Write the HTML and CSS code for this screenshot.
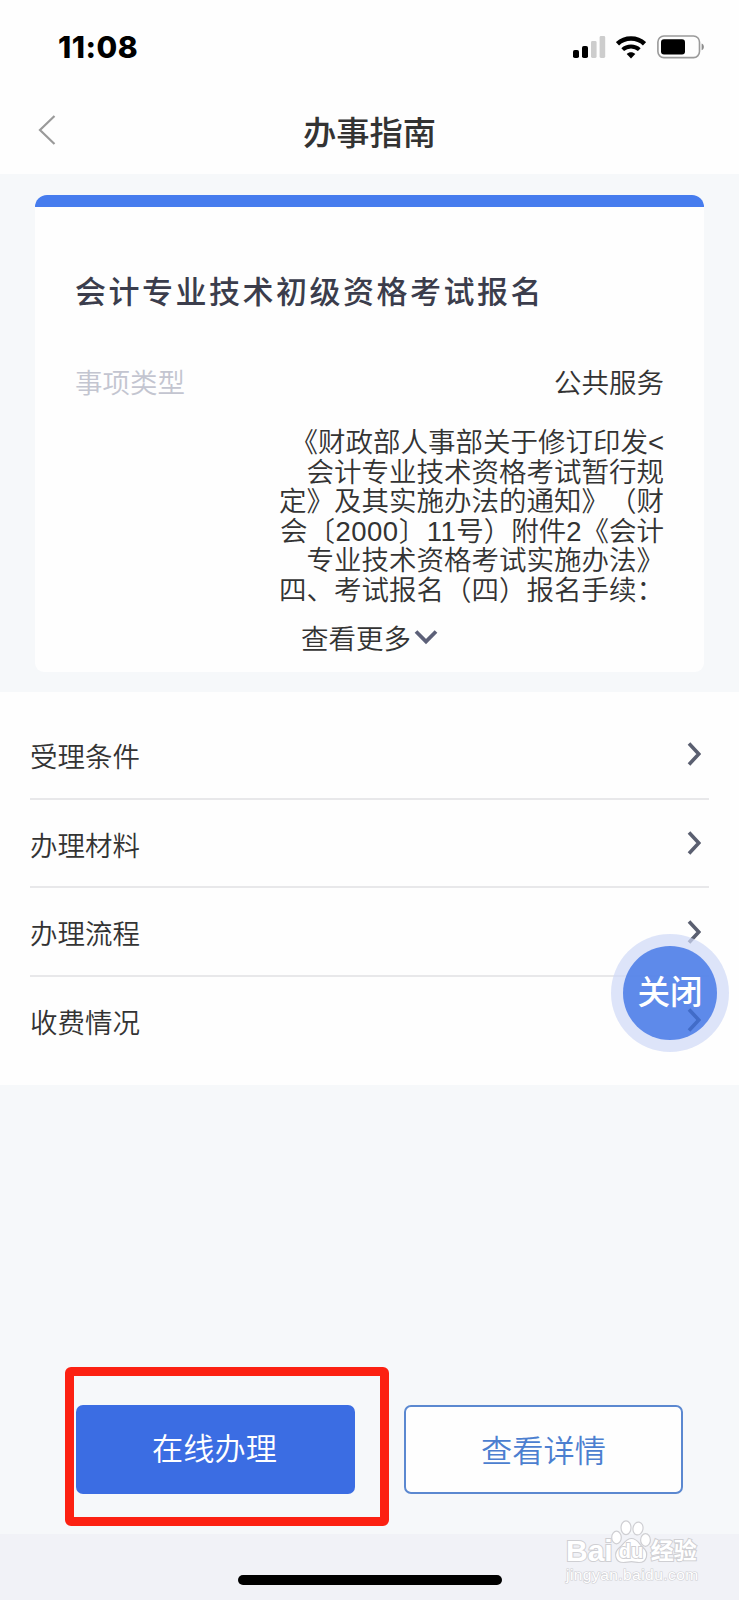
FILE: index.html
```html
<!DOCTYPE html>
<html lang="zh-CN">
<head>
<meta charset="utf-8">
<meta name="viewport" content="width=device-width">
<title>办事指南</title>
<link rel="stylesheet" href="styles.css">
</head>
<body>
<div class="app">
  <header class="top">
    <div class="status">
      <span class="time">11:08</span>
      <div class="status-icons">
        <svg class="signal" viewBox="0 0 33 22" width="33" height="22">
          <rect x="0" y="14" width="6" height="8" rx="1.8" fill="#000"/>
          <rect x="9" y="10" width="6" height="12" rx="1.8" fill="#000"/>
          <rect x="18" y="5" width="5.6" height="17" rx="1.4" fill="#cdcdcd"/>
          <rect x="26.6" y="0" width="5.6" height="22" rx="1.4" fill="#cdcdcd"/>
        </svg>
        <svg class="wifi" viewBox="0 0 30 23" width="30" height="23">
          <path d="M1.500 7.800C9 .8 21 .8 28.500 7.800" fill="none" stroke="#000" stroke-width="4.600"/>
          <path d="M6.700 13.600c4.600-4.300 12-4.300 16.600 0" fill="none" stroke="#000" stroke-width="4"/>
          <path d="M10.700 18.100c2.400-2.400 6.200-2.400 8.600 0L15 22.500z" fill="#000"/>
        </svg>
        <svg class="battery" viewBox="0 0 48 24" width="48" height="24">
          <rect x=".9" y="1" width="41.6" height="21.6" rx="6" fill="none" stroke="#9a9a9a" stroke-width="1.6"/>
          <rect x="4" y="4.2" width="24" height="15.2" rx="3" fill="#000"/>
          <path d="M44.600 8.400c3 1 3 5.800 0 6.800z" fill="#8c8c8c"/>
        </svg>
      </div>
    </div>
    <nav class="nav">
      <svg class="back" viewBox="0 0 18 32" width="18" height="32"><path d="M16.500 2 2 16l14.500 14" fill="none" stroke="#9a9a9a" stroke-width="2.200"/></svg>
      <h1 class="nav-title">办事指南</h1>
    </nav>
  </header>

  <section class="card">
    <h2 class="card-title">会计专业技术初级资格考试报名</h2>
    <div class="row">
      <span class="label">事项类型</span>
      <span>公共服务</span>
    </div>
    <p class="basis">《财政部人事部关于修订印发&lt;<br>会计专业技术资格考试暂行规<br>定》及其实施办法的通知》（财<br>会<span class="wide">〔2000〕11</span>号）附件2《会计<br>专业技术资格考试实施办法》<br>四、考试报名（四）报名手续：</p>
    <div class="more">
      <span>查看更多</span>
      <svg viewBox="0 0 24 16" width="24" height="16"><path d="M2 2.500 12 12.500 22 2.500" fill="none" stroke="#5c6078" stroke-width="3.800"/></svg>
    </div>
  </section>

  <section class="list">
    <div class="item"><span>受理条件</span><svg class="chev" viewBox="0 0 14 24" width="14" height="24"><path d="M2 1.500 11.800 12 2 22.500" fill="none" stroke="#5a5f70" stroke-width="3.600"/></svg></div>
    <div class="item"><span>办理材料</span><svg class="chev" viewBox="0 0 14 24" width="14" height="24"><path d="M2 1.500 11.800 12 2 22.500" fill="none" stroke="#5a5f70" stroke-width="3.600"/></svg></div>
    <div class="item"><span>办理流程</span><svg class="chev" viewBox="0 0 14 24" width="14" height="24"><path d="M2 1.500 11.800 12 2 22.500" fill="none" stroke="#5a5f70" stroke-width="3.600"/></svg></div>
    <div class="close"><span class="close-core">关闭</span></div>
    <div class="item last"><span>收费情况</span><svg class="chev" viewBox="0 0 14 24" width="14" height="24"><path d="M2 1.500 11.800 12 2 22.500" fill="none" stroke="#426cc8" stroke-width="3.600"/></svg></div>
  </section>

  <footer class="actions">
    <div class="btn primary"><span>在线办理</span><span class="mark"></span></div>
    <div class="btn outline"><span>查看详情</span></div>
  </footer>
  <div class="home"><span class="home-bar"></span></div>

  <div class="wm">
    <div class="wm-top">
      <span class="wm-bai">Bai</span>
      <span class="wm-paw">
        <svg viewBox="0 0 40 44" width="40" height="44" fill="#fff" stroke="#cfcfd3" stroke-width="1.200">
          <path d="M20.500 18.500c6 0 7.500 5.500 11.500 9 6.500 5.500 4 15-4 15-3 0-4.500-.8-7.500-.8s-5 .8-8 .8c-8.500 0-10.500-9.500-4-15 4.500-3.500 6-9 12-9z"/>
          <ellipse cx="5.500" cy="17.500" rx="4.800" ry="6.300"/>
          <ellipse cx="15" cy="7.800" rx="5" ry="6.900"/>
          <ellipse cx="27" cy="8.500" rx="5" ry="6.500" transform="rotate(10 27 8.500)"/>
          <ellipse cx="34.500" cy="20" rx="4.900" ry="6.300"/>
        </svg>
        <span class="wm-du">du</span>
      </span>
      <span class="wm-cn">经验</span>
    </div>
    <div class="wm-url">jingyan.baidu.com</div>
  </div>
</div>
</body>
</html>
```
FILE: styles.css
```css
* { box-sizing: border-box; }
body {
  margin: 0;
  background: #f6f8fa;
  color: #333;
  font-family: "Liberation Sans", "Noto Sans CJK SC", sans-serif;
  font-size: 27.5px;
  font-weight: 350;
  line-height: 30px;
  text-spacing-trim: space-all;
}
h1, h2, p { margin: 0; }
svg { display: block; flex: none; }
.app {
  position: relative;
  width: 739px;
  height: 1600px;
  display: flex;
  flex-direction: column;
  overflow: hidden;
  white-space: nowrap;
}

.top { height: 174px; background: #fefefe; }
.status {
  height: 94px;
  padding: 0 34px 0 58px;
  display: flex;
  align-items: center;
  justify-content: space-between;
}
.time {
  font: 800 30px/30px Inter, sans-serif;
  letter-spacing: .5px;
  color: #000;
}
.status-icons { display: flex; align-items: center; }
.wifi { margin-left: 10px; }
.battery { margin-left: 11px; }
.nav {
  height: 76px;
  padding: 0 38px;
  display: grid;
  grid-template-columns: 18px 1fr 18px;
  align-items: center;
}
.back { margin-top: -4px; }
.nav-title {
  padding-top: 3px;
  text-align: center;
  font-size: 33.3px;
  line-height: 40px;
  font-weight: 500;
  color: #333;
}

.card {
  height: 477px;
  margin: 21px 35px 20px;
  padding: 66px 40px 0;
  border-top: 12px solid #467cee;
  border-radius: 12px 12px 9px 9px;
  background: #fefefe;
}
.card-title {
  font-size: 31px;
  line-height: 40px;
  letter-spacing: 2.5px;
  font-weight: 500;
  color: #3b3d4c;
}
.row {
  display: flex;
  justify-content: space-between;
  margin-top: 56px;
}
.label { color: #c3c5d0; }
.basis {
  margin-top: 29px;
  line-height: 29.6px;
  text-align: right;
}
.wide { letter-spacing: .5px; }
.more {
  display: flex;
  align-items: center;
  margin: 19px 0 0 226px;
  gap: 3px;
}
.more svg { margin-top: -5px; }

.list {
  position: relative;
  height: 393px;
  padding: 19px 30px 0;
  background: #fefefe;
}
.item {
  height: 88.7px;
  padding: 7px 8px 0 0;
  display: flex;
  align-items: center;
  justify-content: space-between;
  border-bottom: 2px solid #e8e8ea;
}
.last { position: relative; border-bottom-color: transparent; }
.chev { margin-top: -7px; }
.close {
  position: absolute;
  left: 611px;
  top: 242px;
  width: 118px;
  height: 118px;
  padding: 12px;
  border-radius: 50%;
  background: rgba(206, 217, 247, .7);
}
.close-core {
  display: flex;
  align-items: center;
  justify-content: center;
  height: 94px;
  border-radius: 50%;
  background: rgba(80, 127, 232, .9);
  color: #fff;
  font-size: 32.5px;
  font-weight: 450;
}

.actions {
  height: 449px;
  padding: 0 56px 40px 76px;
  display: flex;
  align-items: flex-end;
  justify-content: space-between;
}
.btn {
  position: relative;
  width: 279px;
  height: 89px;
  padding-top: 1px;
  display: flex;
  align-items: center;
  justify-content: center;
  border-radius: 7px;
  font-size: 31.2px;
}
.primary { padding-right: 2px; background: #3b6de3; color: #fff; }
.outline { padding-top: 4px; border: 2px solid #5b88d0; background: #fefefe; color: #4c7fd0; }
.mark {
  position: absolute;
  left: -11px;
  top: -38px;
  width: 324px;
  height: 159px;
  border: 9px solid #fc2112;
  border-radius: 6px;
}
.home {
  flex: 1;
  padding-top: 41px;
  background: #f1f2f7;
}
.home-bar {
  display: block;
  width: 264px;
  height: 10px;
  margin: 0 auto;
  border-radius: 5px;
  background: #000;
}

.wm {
  position: absolute;
  left: 566px;
  top: 1520px;
  color: #fff;
}
.wm-top { display: flex; align-items: flex-end; height: 46px; }
.wm-bai, .wm-cn, .wm-du, .wm-url { paint-order: stroke; -webkit-text-stroke: 2px #cfcfd3; }
.wm-bai { font: 700 30px/30px "Liberation Sans", sans-serif; }
.wm-paw { position: relative; margin: 0 0 2px -2px; }
.wm-du {
  position: absolute;
  left: 8px;
  top: 21px;
  font: 700 20px/20px "Liberation Sans", sans-serif;
}
.wm-cn { font-size: 23px; line-height: 30px; font-weight: 700; }
.wm-url {
  font: 15.5px/18px "Liberation Sans", sans-serif;
  letter-spacing: .45px;
  -webkit-text-stroke-width: 1.2px;
}
```
